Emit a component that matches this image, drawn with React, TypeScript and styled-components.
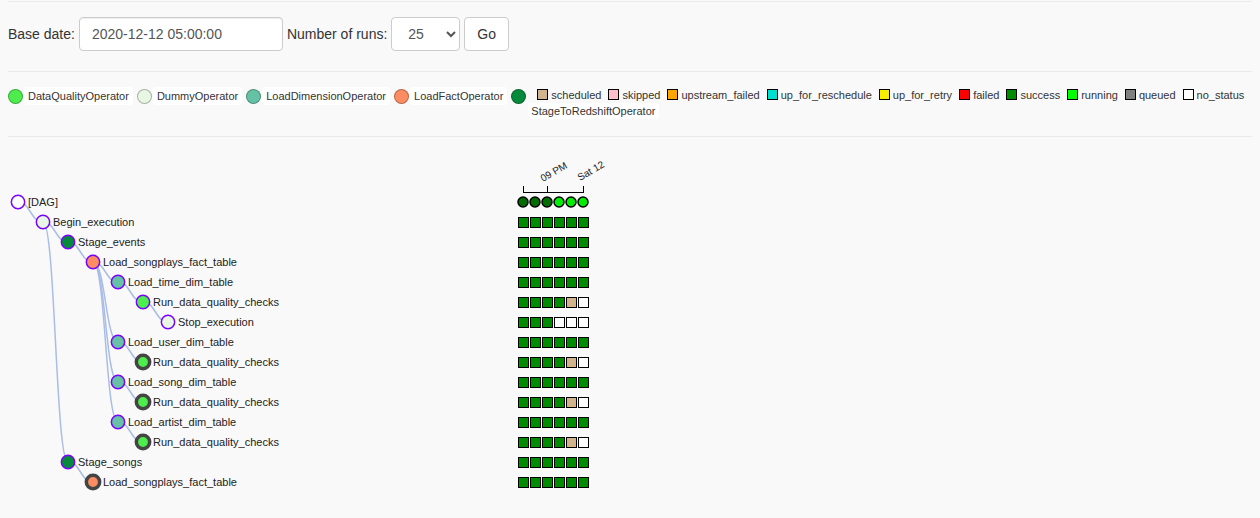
import React from "react";
import styled, { createGlobalStyle } from "styled-components";

const GlobalStyle = createGlobalStyle`
  html, body { margin: 0; padding: 0; background: #f9f9f9; }
  body {
    font-family: "Liberation Sans", Arial, Helvetica, sans-serif;
    color: #333;
  }
`;

const Page = styled.div`
  padding: 0 8px;
  width: 1260px;
  box-sizing: border-box;
`;

const Rule = styled.hr<{ $top?: number }>`
  margin: ${(p) => p.$top ?? 0}px 0 0 0;
  border: 0;
  border-top: 1px solid #eaeaea;
  height: 0;
`;

const FormRow = styled.form`
  display: flex;
  align-items: center;
  gap: 4px;
  margin: 15px 0 20px 0;
  height: 34px;
`;

const FieldLabel = styled.label`
  font-size: 14px;
  color: #333;
`;

const DateInput = styled.input`
  box-sizing: border-box;
  width: 204px;
  height: 34px;
  padding: 6px 12px;
  font-family: inherit;
  font-size: 14px;
  color: #555;
  background: #fff;
  border: 1px solid #ccc;
  border-radius: 4px;
  box-shadow: inset 0 1px 1px rgba(0, 0, 0, 0.075);
  outline: none;
`;

const RunsSelect = styled.select`
  box-sizing: border-box;
  width: 69px;
  height: 34px;
  padding: 6px 8px 6px 12px;
  font-family: inherit;
  font-size: 14px;
  color: #555;
  background: #fff;
  border: 1px solid #ccc;
  border-radius: 4px;
`;

const GoButton = styled.button`
  box-sizing: border-box;
  height: 34px;
  padding: 6px 12px;
  font-family: inherit;
  font-size: 14px;
  color: #333;
  background: #fff;
  border: 1px solid #ccc;
  border-radius: 4px;
`;

const LegendRow = styled.div`
  display: flex;
  align-items: flex-start;
  padding: 15px 0 17px 0;
`;

const OpItem = styled.div`
  display: flex;
  align-items: center;
  gap: 1px;
  margin-right: 4px;
  flex-shrink: 0;
`;

const OpCircle = styled.span<{ $color: string }>`
  display: inline-block;
  box-sizing: border-box;
  width: 15px;
  height: 15px;
  border-radius: 50%;
  background: ${(p) => p.$color};
  border: 1px solid rgba(0, 0, 0, 0.28);
`;

const OpLabel = styled.span<{ $h?: number; $pl?: number }>`
  display: inline-block;
  background: #fff;
  border-radius: 3px;
  padding: 0 4px 0 ${(p) => p.$pl ?? 4}px;
  height: ${(p) => p.$h ?? 18}px;
  line-height: ${(p) => p.$h ?? 18}px;
  font-size: 11px;
  color: #333;
  white-space: nowrap;
`;

const LastOp = styled.div`
  display: flex;
  align-items: flex-start;
  gap: 1px;
  flex-shrink: 0;
`;

const LastCircleWrap = styled.div`
  padding-top: 2px;
`;

const StateColumn = styled.div`
  display: flex;
  flex-direction: column;
  align-items: flex-start;
  padding-left: 1px;
`;

const StateRow = styled.div`
  display: flex;
  align-items: center;
  height: 15px;
  padding: 0 0 1px 9px;
  white-space: nowrap;
`;

const StateItem = styled.span`
  display: inline-flex;
  align-items: center;
  gap: 3px;
  margin-right: 7px;
  font-size: 11px;
  color: #333;
`;

const Swatch = styled.span<{ $color: string }>`
  display: inline-block;
  box-sizing: border-box;
  width: 11px;
  height: 11px;
  background: ${(p) => p.$color};
  border: 1px solid #000;
`;

const TreeArea = styled.div`
  height: 381px;
`;

const operators = [
  { name: "DataQualityOperator", color: "#4ded4d" },
  { name: "DummyOperator", color: "#e8f7e4" },
  { name: "LoadDimensionOperator", color: "#66c2a5" },
  { name: "LoadFactOperator", color: "#fc8d62" },
];

const states = [
  { name: "scheduled", color: "#d2b48c" },
  { name: "skipped", color: "#ffc0cb" },
  { name: "upstream_failed", color: "#ffa500" },
  { name: "up_for_reschedule", color: "#00e0d0" },
  { name: "up_for_retry", color: "#f8f000" },
  { name: "failed", color: "#ff0000" },
  { name: "success", color: "#008c00" },
  { name: "running", color: "#00ff00" },
  { name: "queued", color: "#808080" },
  { name: "no_status", color: "#ffffff" },
];

const C = {
  dag: "#ffffff",
  dummy: "#e8f7e4",
  stage: "#058a3b",
  fact: "#fc8d62",
  dim: "#66c2a5",
  dq: "#4ded4d",
};

type Node = { d: number; label: string; fill: string; collapsed?: boolean; parent: number };

const nodes: Node[] = [
  { d: 0, label: "[DAG]", fill: C.dag, parent: -1 },
  { d: 1, label: "Begin_execution", fill: C.dummy, parent: 0 },
  { d: 2, label: "Stage_events", fill: C.stage, parent: 1 },
  { d: 3, label: "Load_songplays_fact_table", fill: C.fact, parent: 2 },
  { d: 4, label: "Load_time_dim_table", fill: C.dim, parent: 3 },
  { d: 5, label: "Run_data_quality_checks", fill: C.dq, parent: 4 },
  { d: 6, label: "Stop_execution", fill: C.dummy, parent: 5 },
  { d: 4, label: "Load_user_dim_table", fill: C.dim, parent: 3 },
  { d: 5, label: "Run_data_quality_checks", fill: C.dq, parent: 7, collapsed: true },
  { d: 4, label: "Load_song_dim_table", fill: C.dim, parent: 3 },
  { d: 5, label: "Run_data_quality_checks", fill: C.dq, parent: 9, collapsed: true },
  { d: 4, label: "Load_artist_dim_table", fill: C.dim, parent: 3 },
  { d: 5, label: "Run_data_quality_checks", fill: C.dq, parent: 11, collapsed: true },
  { d: 2, label: "Stage_songs", fill: C.stage, parent: 1 },
  { d: 3, label: "Load_songplays_fact_table", fill: C.fact, parent: 13, collapsed: true },
];

const S = "s", T = "t", W = "w";
const grid: string[][] = [
  [],
  [S, S, S, S, S, S],
  [S, S, S, S, S, S],
  [S, S, S, S, S, S],
  [S, S, S, S, S, S],
  [S, S, S, S, T, W],
  [S, S, S, W, W, W],
  [S, S, S, S, S, S],
  [S, S, S, S, T, W],
  [S, S, S, S, S, S],
  [S, S, S, S, T, W],
  [S, S, S, S, S, S],
  [S, S, S, S, T, W],
  [S, S, S, S, S, S],
  [S, S, S, S, S, S],
];
const cellColor: Record<string, string> = { s: "#008c00", t: "#d2b48c", w: "#ffffff" };
const runFills = ["#006e00", "#006e00", "#006e00", "#00ee00", "#00ee00", "#00ee00"];

// SVG origin sits at page (8, 137)
const OX = 8;
const OY = 137;
const nx = (d: number) => 18 + 25 * d - OX;
const ny = (i: number) => 202 + 20 * i - OY;

function TreeChart() {
  return (
    <svg width={1244} height={381} style={{ display: "block" }}>
      <g fill="none" stroke="#a9bde6" strokeWidth={1.5}>
        {nodes.map((n, i) => {
          if (n.parent < 0) return null;
          const p = nodes[n.parent];
          const x0 = nx(p.d), y0 = ny(n.parent), x1 = nx(n.d), y1 = ny(i);
          const m = (x0 + x1) / 2;
          return <path key={i} d={`M${x0},${y0}C${m},${y0} ${m},${y1} ${x1},${y1}`} />;
        })}
      </g>
      {nodes.map((n, i) => (
        <g key={i}>
          <circle
            cx={nx(n.d)}
            cy={ny(i)}
            r={6.67}
            fill={n.fill}
            stroke={n.collapsed ? "#444" : "#7a00ff"}
            strokeWidth={n.collapsed ? 3.5 : 1.5}
          />
          <text
            x={nx(n.d) + 10}
            y={ny(i) + 3.5}
            fontSize={11}
            fontFamily='"Liberation Sans", Arial, sans-serif'
            fill="#222"
          >
            {n.label}
          </text>
        </g>
      ))}
      <g stroke="#000" strokeWidth={1} fill="none">
        <line x1={523 - OX} y1={192.5 - OY} x2={584 - OX} y2={192.5 - OY} />
        <line x1={523.5 - OX} y1={186 - OY} x2={523.5 - OX} y2={193 - OY} />
        <line x1={547.5 - OX} y1={186 - OY} x2={547.5 - OX} y2={193 - OY} />
        <line x1={583.5 - OX} y1={186 - OY} x2={583.5 - OX} y2={193 - OY} />
      </g>
      <g fontSize={10} fontFamily='"Liberation Sans", Arial, sans-serif' fill="#222">
        <text transform={`translate(${543 - OX},${182 - OY}) rotate(-30)`}>09 PM</text>
        <text transform={`translate(${580 - OX},${181 - OY}) rotate(-30)`}>Sat 12</text>
      </g>
      {runFills.map((f, j) => (
        <circle key={j} cx={523 + 12 * j - OX} cy={202 - OY} r={5} fill={f} stroke="#000" strokeWidth={1.5} />
      ))}
      {grid.map((row, i) =>
        row.map((c, j) => (
          <rect
            key={`${i}-${j}`}
            x={518.5 + 12 * j - OX}
            y={202 + 20 * i - 4.5 - OY}
            width={10}
            height={10}
            fill={cellColor[c]}
            stroke="#000"
            strokeWidth={1}
          />
        ))
      )}
    </svg>
  );
}

export default function App() {
  return (
    <Page>
      <GlobalStyle />
      <Rule $top={1} />
      <FormRow onSubmit={(e) => e.preventDefault()}>
        <FieldLabel>Base date:</FieldLabel>
        <DateInput defaultValue="2020-12-12 05:00:00" />
        <FieldLabel>Number of runs:</FieldLabel>
        <RunsSelect defaultValue="25">
          <option value="5">5</option>
          <option value="25">25</option>
          <option value="50">50</option>
          <option value="100">100</option>
        </RunsSelect>
        <GoButton type="submit">Go</GoButton>
      </FormRow>
      <Rule />
      <LegendRow>
        {operators.map((o) => (
          <OpItem key={o.name}>
            <OpCircle $color={o.color} />
            <OpLabel>{o.name}</OpLabel>
          </OpItem>
        ))}
        <LastOp>
          <LastCircleWrap>
            <OpCircle $color={C.stage} />
          </LastCircleWrap>
          <StateColumn>
            <StateRow>
              {states.map((s) => (
                <StateItem key={s.name}>
                  <Swatch $color={s.color} />
                  {s.name}
                </StateItem>
              ))}
            </StateRow>
            <OpLabel $h={16} $pl={3}>StageToRedshiftOperator</OpLabel>
          </StateColumn>
        </LastOp>
      </LegendRow>
      <Rule />
      <TreeArea>
        <TreeChart />
      </TreeArea>
    </Page>
  );
}
